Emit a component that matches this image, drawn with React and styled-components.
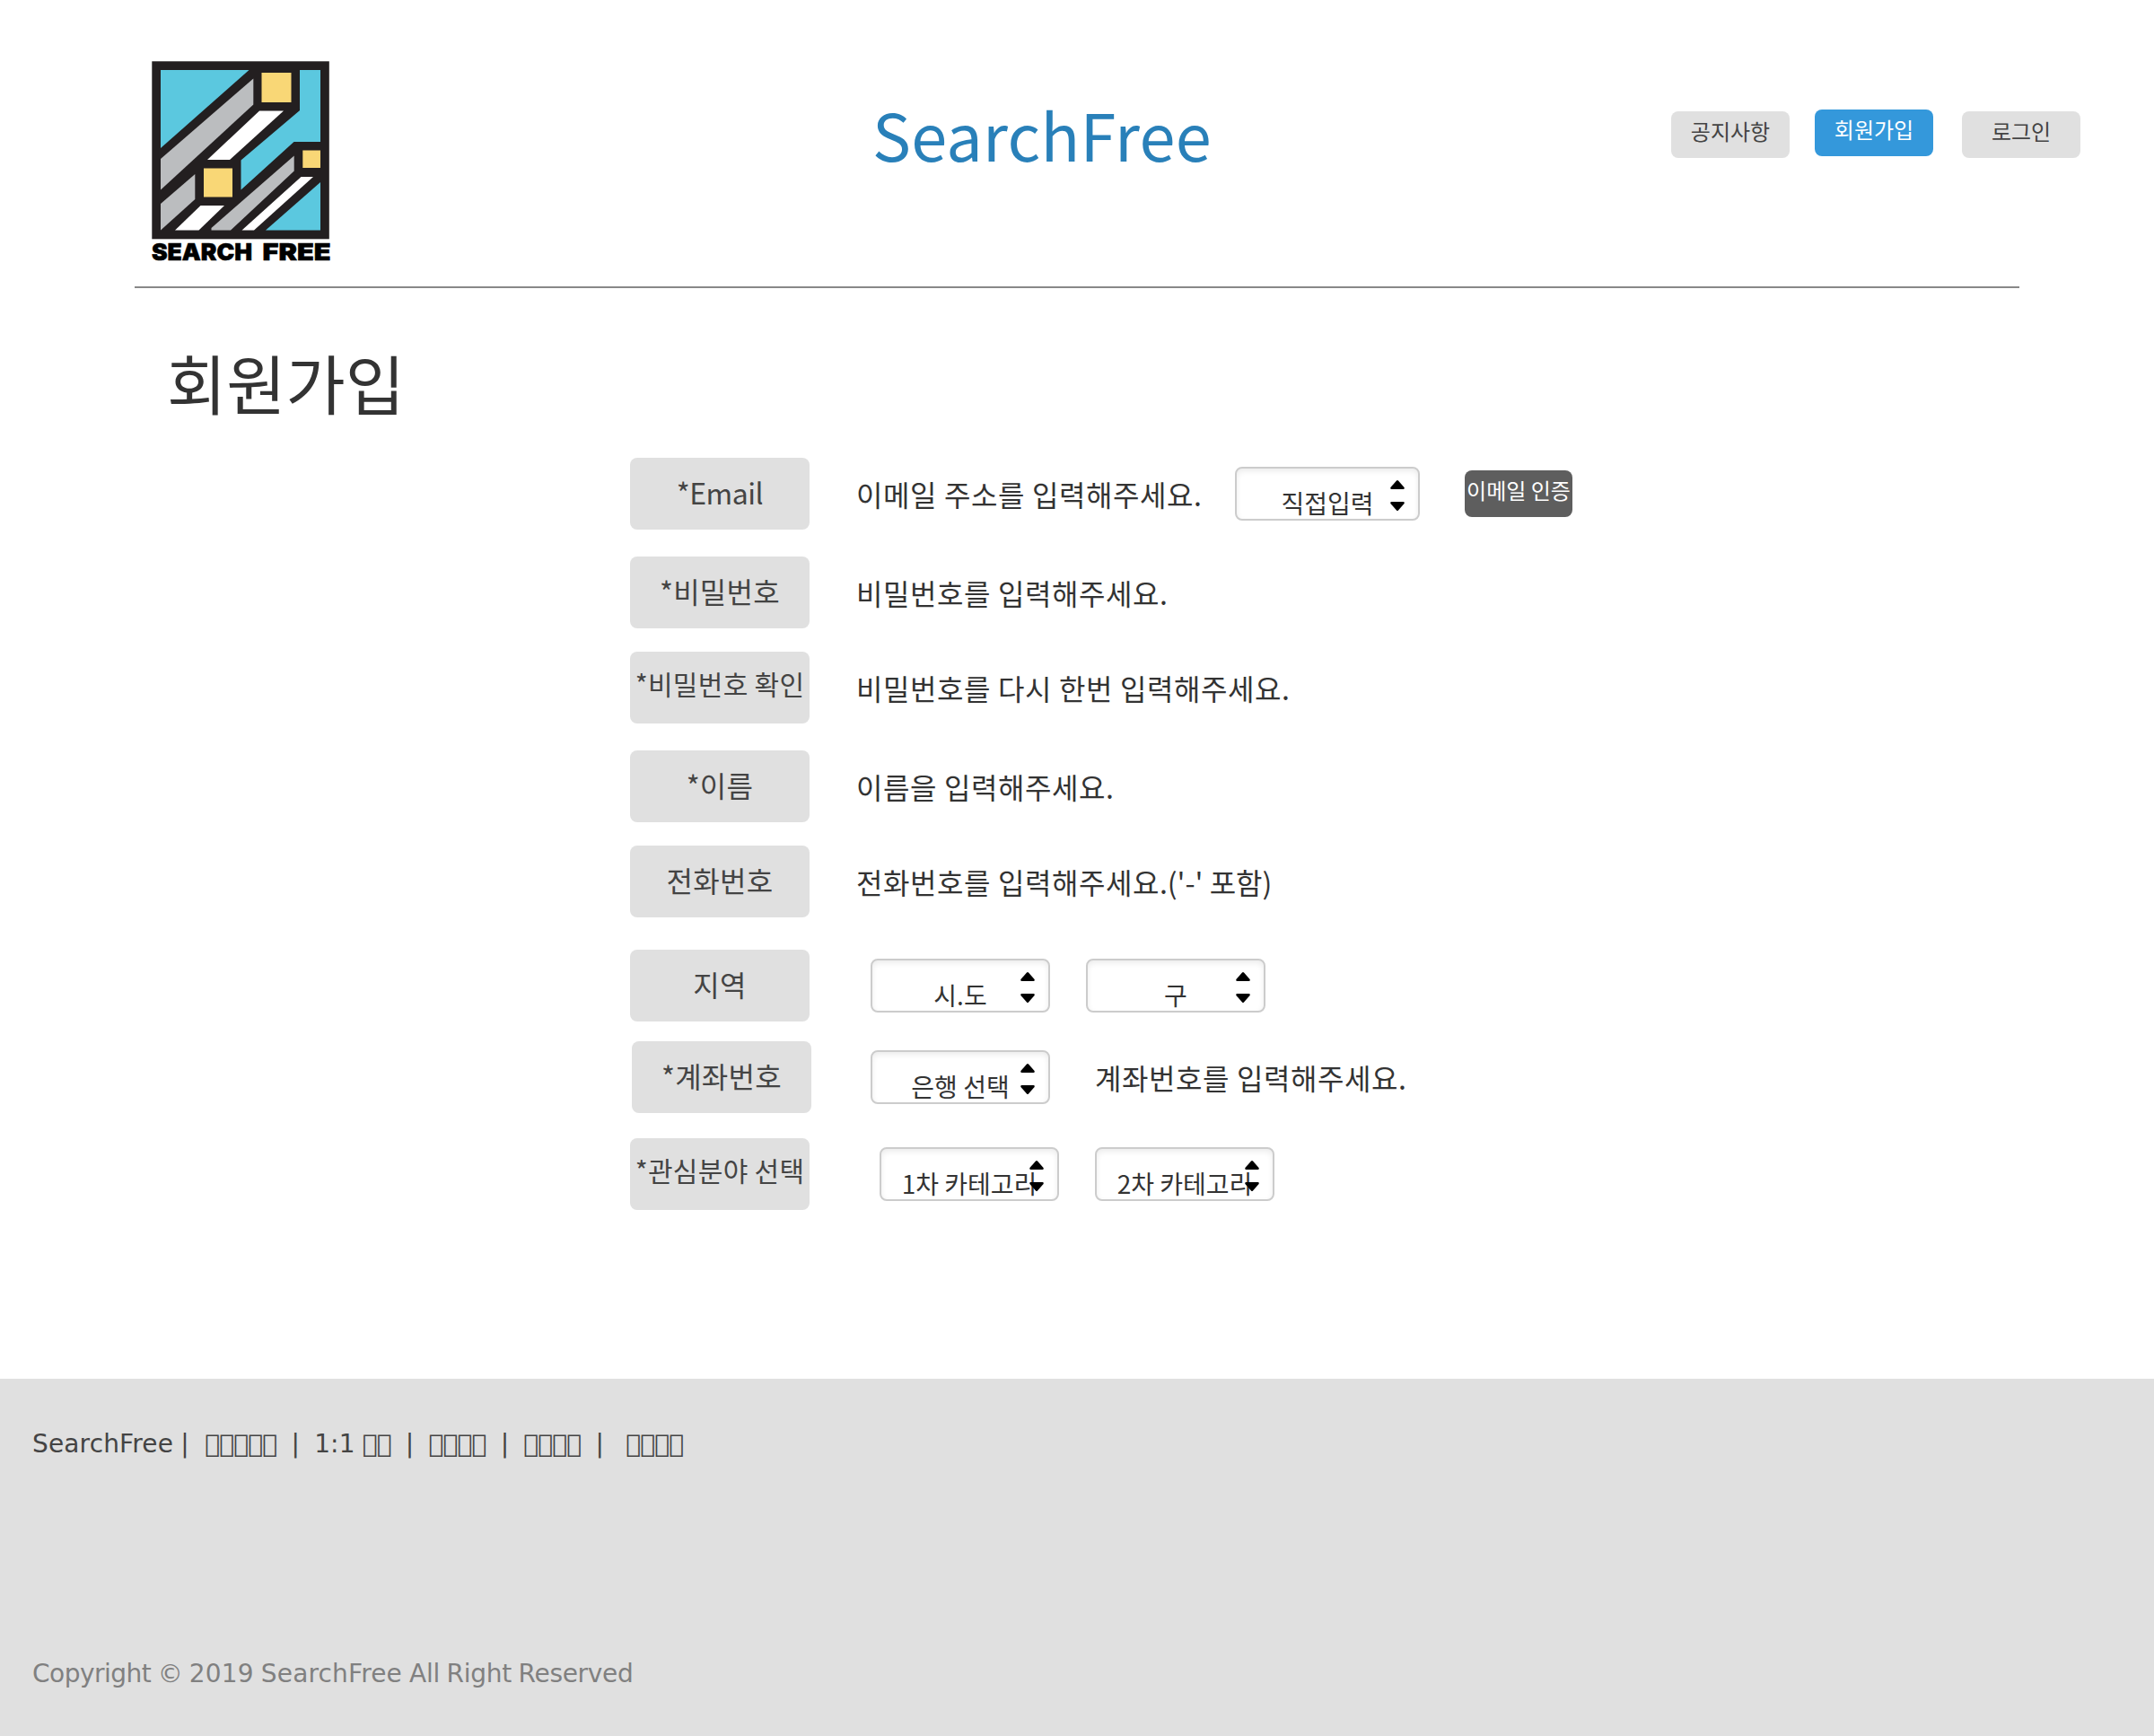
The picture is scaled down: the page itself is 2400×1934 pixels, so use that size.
import React from "react";
import styled, { createGlobalStyle } from "styled-components";

const Global = createGlobalStyle`
  * { box-sizing: border-box; }
  body { margin: 0; background: #fff; }
`;

const Page = styled.div`
  width: 2400px;
  height: 1934px;
  display: flex;
  flex-direction: column;
  font-family: "Noto Sans CJK KR", "Noto Sans", sans-serif;
  color: #333;
  white-space: pre;
`;

const Header = styled.header`
  height: 319px;
  display: flex;
  align-items: flex-start;
`;

const LogoLink = styled.a`
  display: block;
  width: 204px;
  margin: 66px 0 0 167px;
  line-height: 0;
`;

const Brand = styled.h1`
  width: 400px;
  margin: 96px 0 0 601px;
  font-size: 72px;
  font-weight: 400;
  line-height: 105px;
  letter-spacing: 0.3px;
  color: #2980b9;
`;

const Nav = styled.nav`
  display: flex;
  margin: 122px 0 0 490px;
`;

const Button = styled.button`
  width: ${(p) => p.$width || 132}px;
  height: 52px;
  margin: ${(p) => p.$top || 0}px 0 0 ${(p) => p.$gap || 0}px;
  padding: 0 0 9px;
  border: 0;
  border-radius: 8px;
  background: ${(p) => p.$bg || "#e0e0e0"};
  color: ${(p) => p.$color || "#444"};
  font: 400 24px/43px "Noto Sans CJK KR", sans-serif;
  text-align: center;
  white-space: pre;
`;

const Divider = styled.hr`
  width: 2100px;
  height: 2px;
  margin: 0 auto;
  border: 0;
  background: #888;
`;

const PageTitle = styled.h2`
  margin: 51px 0 0 186px;
  height: 104px;
  font-size: 72px;
  font-weight: 400;
  line-height: 105px;
`;

const Form = styled.form`
  flex: 1;
  margin: 34px 0 0 702px;
`;

const Row = styled.div`
  display: flex;
  align-items: center;
  height: 80px;
  margin: 0 0 ${(p) => p.$after || 0}px ${(p) => p.$indent || 0}px;
`;

const Label = styled.label`
  width: 200px;
  height: 80px;
  border-radius: 8px;
  background: #e0e0e0;
  color: #444;
  text-align: center;
  font-size: ${(p) => (p.$small ? 30 : 32)}px;
  line-height: ${(p) => (p.$small ? 70 : 76)}px;
  letter-spacing: ${(p) => p.$tracking ?? 0.3}px;
`;

const Hint = styled.span`
  margin-left: ${(p) => p.$gap || 52}px;
  width: ${(p) => p.$width || "auto"};
  font-size: 32px;
  line-height: 80px;
  letter-spacing: 0.55px;
  word-spacing: 0.3px;
`;

const Tracked = styled.span`
  letter-spacing: ${(p) => p.$by}px;
`;

const SelectBox = styled.div`
  display: flex;
  align-items: center;
  justify-content: flex-end;
  position: relative;
  width: ${(p) => p.$width || 200}px;
  height: 60px;
  margin-left: ${(p) => p.$gap || 0}px;
  padding-right: 15px;
  border: 2px solid #ccc;
  border-radius: 8px;
  background: #fff;
  box-shadow: inset 0 3px 6px rgba(0, 0, 0, 0.08);
`;

const SelectText = styled.span`
  position: absolute;
  inset: 18px 0 auto;
  height: 40px;
  text-align: center;
  font-size: 28px;
  line-height: 40px;
`;

const Arrows = styled.svg`
  position: relative;
  display: block;
  width: 16px;
  height: 34px;
  margin-top: 4px;
`;

const Footer = styled.footer`
  height: 398px;
  padding: 52px 36px 0;
  display: flex;
  flex-direction: column;
  background: #e0e0e0;
  font: 28px/41px "DejaVu Sans", sans-serif;
`;

const FooterLinks = styled.div`
  color: #444;
  letter-spacing: 0.15px;
  word-spacing: -1px;
`;

const Boxes = styled.span`
  letter-spacing: -0.8px;

  &:first-of-type {
    margin-left: 1.5px;
  }
`;

const Copyright = styled.div`
  margin-top: 215px;
  color: #808080;
  word-spacing: -0.9px;
`;

const Wordmark = styled.text`
  font-family: Inter, "DejaVu Sans", sans-serif;
  font-size: 26px;
  font-weight: 900;
  stroke: #000;
  stroke-width: 0.6px;
`;

function Logo() {
  return (
    <svg width="204" height="232" viewBox="0 0 204 232">
      <rect x="2.3" y="2.3" width="197.5" height="198" fill="#231f20" />
      <g fill="#5bc8df">
        <path d="M12 12H110.500L12 99Z" />
        <path d="M167 12H190V92H160.500L101.500 145.500V112.500L167 57Z" />
        <path d="M190 137V190.500H129Z" />
      </g>
      <g fill="#bbbdbf">
        <path d="M115.300 21.500V50.500L12 145.500V111Z" />
        <path d="M50.300 128V156L12 190.500V161Z" />
        <path d="M160.700 107.500V124.500L90 190.500H68.500V188Z" />
      </g>
      <g fill="#fff">
        <path d="M122 57.500H149L89 112H64Z" />
        <path d="M56.500 163H83L54.500 190.500H28Z" />
        <path d="M168.500 131H182L116 190.500H102.500Z" />
      </g>
      <g fill="#f9d776">
        <rect x="124.500" y="15" width="33" height="33" />
        <rect x="60" y="121.500" width="32" height="32" />
        <rect x="170.300" y="101.500" width="19.700" height="19.500" />
      </g>
      <Wordmark x="2" y="224" textLength="112" lengthAdjust="spacingAndGlyphs">SEARCH</Wordmark>
      <Wordmark x="125.500" y="224" textLength="76" lengthAdjust="spacingAndGlyphs">FREE</Wordmark>
    </svg>
  );
}

function Select({ text, gap, width }) {
  return (
    <SelectBox $gap={gap} $width={width}>
      <SelectText>{text}</SelectText>
      <Arrows viewBox="0 0 16 34">
        <path d="M7 .6Q8-.4 9 .6L15.600 8Q16.200 10 14.500 10H1.500Q-.2 10 .4 8Z" />
        <path d="M7 33.400Q8 34.400 9 33.400L15.600 26Q16.200 24 14.500 24H1.500Q-.2 24 .4 26Z" />
      </Arrows>
    </SelectBox>
  );
}

function Tofu({ n }) {
  return <Boxes>{"\uE123".repeat(n)}</Boxes>;
}

export default function App() {
  return (
    <Page>
      <Global />
      <Header>
        <LogoLink><Logo /></LogoLink>
        <Brand>SearchFree</Brand>
        <Nav>
          <Button $top={2}>공지사항</Button>
          <Button $gap={28} $bg="#3498db" $color="#fff">회원가입</Button>
          <Button $gap={32} $top={2}>로그인</Button>
        </Nav>
      </Header>
      <Divider />
      <PageTitle>회원가입</PageTitle>
      <Form>
        <Row $after={30}>
          <Label $tracking={-0.5}>*Email</Label>
          <Hint $width="422px">이메일 주소를 입력해주세요.</Hint>
          <Select text="직접입력" width={206} />
          <Button type="button" $width={120} $gap={50} $bg="#5e5e5e" $color="#fff">이메일 인증</Button>
        </Row>
        <Row $after={26}>
          <Label>*비밀번호</Label>
          <Hint>비밀번호를 입력해주세요.</Hint>
        </Row>
        <Row $after={30}>
          <Label $small>*비밀번호 확인</Label>
          <Hint>비밀번호를 다시 한번 입력해주세요.</Hint>
        </Row>
        <Row $after={26}>
          <Label>*이름</Label>
          <Hint>이름을 입력해주세요.</Hint>
        </Row>
        <Row $after={36}>
          <Label>전화번호</Label>
          <Hint>전화번호를 입력해주세요<Tracked $by={-0.05}>.('-' 포함)</Tracked></Hint>
        </Row>
        <Row $after={22}>
          <Label>지역</Label>
          <Select text="시.도" gap={68} />
          <Select text="구" gap={40} />
        </Row>
        <Row $after={28} $indent={2}>
          <Label>*계좌번호</Label>
          <Select text="은행 선택" gap={66} />
          <Hint $gap={50}>계좌번호를 입력해주세요.</Hint>
        </Row>
        <Row>
          <Label $small>*관심분야 선택</Label>
          <Select text="1차 카테고리" gap={78} />
          <Select text="2차 카테고리" gap={40} />
        </Row>
      </Form>
      <Footer>
        <FooterLinks>
          {"SearchFree |  "}<Tofu n={5} />{"  |  1:1 "}<Tofu n={2} />{"  |  "}<Tofu n={4} />{"  |  "}<Tofu n={4} />{"  |   "}<Tofu n={4} />
        </FooterLinks>
        <Copyright>
          <Tracked $by={-0.5}>Copyright © </Tracked>
          <Tracked $by={0.15}>2019 SearchFree </Tracked>
          <Tracked $by={-0.3}>All Right Reserved</Tracked>
        </Copyright>
      </Footer>
    </Page>
  );
}
